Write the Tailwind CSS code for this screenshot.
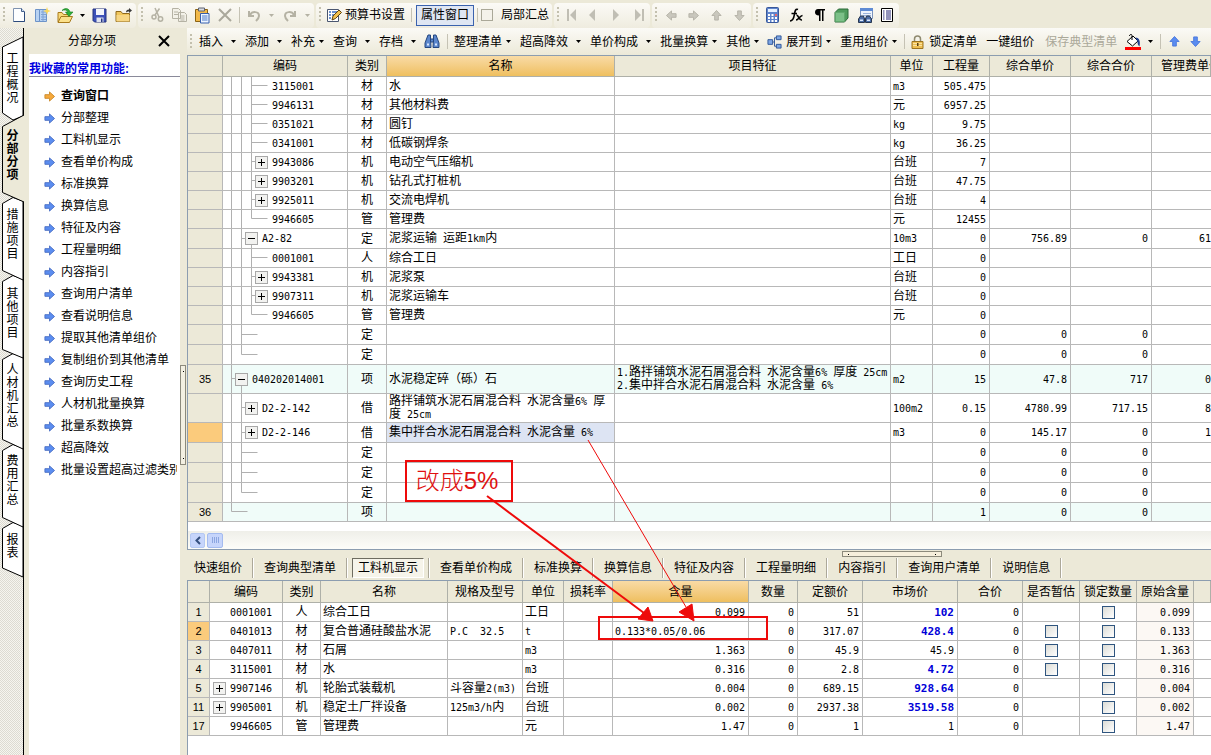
<!DOCTYPE html>
<html lang="zh-CN">
<head>
<meta charset="utf-8">
<title>分部分项</title>
<script src="https://cdn.jsdelivr.net/npm/@tailwindcss/browser@4"></script>
</head>
<body class="bg-[#ece9d8] text-black text-[12px] leading-[14px] font-['Liberation_Sans','Noto_Sans_CJK_SC',sans-serif]">
<svg class="hidden">
  <symbol id="grip" viewBox="0 0 8 18"><path d="M3 1h2v2H3zM3 5h2v2H3zM3 9h2v2H3zM3 13h2v2H3z" fill="#c3c0ae"/></symbol>
  <symbol id="dd" viewBox="0 0 5 3"><path d="M0 0h5L2.500 3z" fill="currentColor"/></symbol>
  <symbol id="arr" viewBox="0 0 12 12"><path d="M1 4h5V1l5.500 5L6 11V8H1z"/></symbol>
</svg>
<div class="relative flex h-screen flex-col overflow-hidden">

  <!-- main toolbar -->
  <header class="flex h-[28px] shrink-0 items-center gap-[2px] overflow-hidden whitespace-nowrap pt-[2px]">
    <div class="flex h-[25px] items-center rounded-r bg-gradient-to-b from-[#fbfaf6] to-[#efecdf]">
      <svg class="h-[18px] w-[8px]"><use href="#grip"/></svg>
      <button aria-label="新建" class="flex w-[22px] justify-center"><svg width="14" height="16" viewBox="0 0 14 16"><path d="M1.500 1.500h8l3 3v10h-11z" fill="#fdfeff" stroke="#7f93b0"/><path d="M9.500 1.500v3h3" fill="#cfe0f4" stroke="#44608c"/><path d="M12.500 5v9.500h-11" fill="none" stroke="#2c4a7c"/></svg></button>
      <button aria-label="新建向导" class="flex w-[24px] justify-center"><svg width="17" height="17" viewBox="0 0 17 17"><path d="M1.500 2.500h4v12h-4zM5.500 2.500h7v12h-7z" fill="#b8d2f2" stroke="#6c93c9"/><path d="M7 5h5M7 7.500h5M7 10h5M7 12.500h5M9 3v11" stroke="#7fa3d6"/><path d="M13 0l1 3 3 1-3 1-1 3-1-3-3-1 3-1z" fill="#f8d75a"/></svg></button>
      <button aria-label="打开" class="flex w-[22px] justify-center"><svg width="17" height="17" viewBox="0 0 17 17"><path d="M1 15V5.500h4l1.500 2H12V10" fill="#f9d978" stroke="#a87a1c"/><path d="M1 15.500L4 9.500h11.500l-3 6z" fill="#fbe08a" stroke="#a87a1c"/><path d="M5 3.500C8 .5 12 1 13 5h3l-4 4.500L8.500 5H11C10 3 7.500 2.500 5 3.500z" fill="#2fb13a" stroke="#167a20" stroke-width=".6"/></svg></button>
      <button aria-label="打开列表" class="flex w-[12px] justify-center"><svg class="h-[3px] w-[5px]"><use href="#dd"/></svg></button>
      <button aria-label="保存" class="flex w-[22px] justify-center"><svg width="15" height="15" viewBox="0 0 15 15"><path d="M1 1h13v13H2.500L1 12.500z" fill="#3c50b8" stroke="#26357f"/><path d="M4 1h8v6H4z" fill="#f3f5fb"/><path d="M4.500 9.500h7V14h-7z" fill="#dfe3ef"/><path d="M9 10.500h1.500V14H9z" fill="#26357f"/></svg></button>
      <button aria-label="关闭工程" class="flex w-[26px] justify-center"><svg width="17" height="15" viewBox="0 0 17 15"><path d="M1 13.500V3.500h5l1.500 2h7v8z" fill="#f0c65c" stroke="#8f681c"/><path d="M1.500 7h13v6.500h-13z" fill="#f7d684"/><path d="M11 4.500c0-2 1-3 3-3V0l3 2.500L14 5V3.500c-1 0-2 0-3 1z" fill="#3b3b3b"/></svg></button>
    </div>
    <div class="flex h-[25px] items-center rounded bg-gradient-to-b from-[#fbfaf6] to-[#efecdf] text-[#b5b2a4]">
      <svg class="h-[18px] w-[8px]"><use href="#grip"/></svg>
      <button aria-label="剪切" class="flex w-[22px] justify-center"><svg width="13" height="16" viewBox="0 0 13 16" fill="none" stroke="currentColor" stroke-width="1.500"><path d="M4 1l4 9M8.500 1.500L4 8"/><circle cx="3" cy="10" r="2"/><circle cx="9.500" cy="12" r="2.200"/></svg></button>
      <button aria-label="复制" class="flex w-[22px] justify-center"><svg width="17" height="16" viewBox="0 0 17 16" fill="#f3f1e8" stroke="currentColor"><path d="M1.500 1.500h6l2 2v8h-8zM7.500 5.500h6l2 2v7h-8z"/><path d="M3 5h4M3 7.500h4M9.500 9h4M9.500 11h4M9.500 13h4"/></svg></button>
      <button aria-label="粘贴" class="flex w-[24px] justify-center"><svg width="16" height="17" viewBox="0 0 16 17"><path d="M1.500 2.500h12v12h-12z" fill="#f2b94a" stroke="#8c6416"/><path d="M4.500 1h6v3h-6z" fill="#d8dbe2" stroke="#5c6273"/><path d="M6.500 6.500h8.500v9.500H6.500z" fill="#eef5ff" stroke="#365fae"/><path d="M8 9h5.500M8 11h5.500M8 13h5.500" stroke="#4a79c8"/></svg></button>
      <button aria-label="删除" class="flex w-[22px] justify-center"><svg width="14" height="14" viewBox="0 0 14 14" stroke="#aaa89c" stroke-width="2"><path d="M1 1l12 12M13 1L1 13"/></svg></button>
      <span class="mx-[3px] h-[16px] w-[2px] border-l border-[#c5c2b4]"></span>
      <button aria-label="撤销" class="flex w-[20px] justify-center"><svg width="13" height="13" viewBox="0 0 13 13" fill="none" stroke="currentColor" stroke-width="2"><path d="M1 2v5h5M2 6c2-4 9-4 9 1 0 2-1 3-3 5"/></svg></button>
      <button aria-label="撤销列表" class="flex w-[14px] justify-center"><svg class="h-[3px] w-[5px]"><use href="#dd"/></svg></button>
      <button aria-label="重做" class="flex w-[22px] justify-center"><svg width="13" height="13" viewBox="0 0 13 13" fill="none" stroke="currentColor" stroke-width="2"><path d="M12 2v5H7M11 6C9 2 2 2 2 7c0 2 1 3 3 5"/></svg></button>
      <button aria-label="重做列表" class="flex w-[14px] justify-center"><svg class="h-[3px] w-[5px]"><use href="#dd"/></svg></button>
    </div>
    <div class="flex h-[25px] items-center rounded bg-gradient-to-b from-[#fbfaf6] to-[#efecdf] pr-[3px]">
      <svg class="h-[18px] w-[8px]"><use href="#grip"/></svg>
      <button class="flex items-center gap-[3px] pl-[2px]"><svg width="16" height="15" viewBox="0 0 16 15"><path d="M1.500 1.500h11v12h-11z" fill="#fff" stroke="#4a5670"/><path d="M3 4h2M3 7h2M3 10h2M6 4h5M6 7h3" stroke="#3d6fc0" stroke-width="1.500"/><path d="M6 12l1-4 6-6 2.500 2.500-6 6z" fill="#f0c050" stroke="#5c4210"/></svg>预算书设置</button>
      <span class="ml-[6px] mr-[4px] h-[14px] w-px bg-[#c5c2b4]"></span>
      <button class="h-[21px] w-[58px] border border-[#3a62ae] bg-[#dfe6f3]">属性窗口</button>
      <span class="mx-[3px] h-[14px] w-px bg-[#c5c2b4]"></span>
      <label class="flex items-center gap-[8px]"><input type="checkbox" class="h-[12px] w-[12px] appearance-none border border-[#aaa898] bg-[#f4f2ea]">局部汇总</label>
    </div>
    <div class="flex h-[25px] items-center rounded bg-gradient-to-b from-[#fbfaf6] to-[#efecdf] text-[#c0beb4]">
      <svg class="h-[18px] w-[8px]"><use href="#grip"/></svg>
      <button aria-label="第一个" class="flex w-[18px] justify-center"><svg width="11" height="12" viewBox="0 0 11 12" fill="currentColor"><path d="M1 0h2v12H1zM10 0v12L4 6z"/></svg></button>
      <button aria-label="上一个" class="flex w-[24px] justify-center"><svg width="8" height="12" viewBox="0 0 8 12" fill="currentColor"><path d="M7 0v12L1 6z"/></svg></button>
      <button aria-label="下一个" class="flex w-[24px] justify-center"><svg width="8" height="12" viewBox="0 0 8 12" fill="currentColor"><path d="M1 0v12l6-6z"/></svg></button>
      <button aria-label="最后一个" class="flex w-[22px] justify-center"><svg width="11" height="12" viewBox="0 0 11 12" fill="currentColor"><path d="M8 0h2v12H8zM1 0v12l6-6z"/></svg></button>
    </div>
    <div class="flex h-[25px] items-center rounded bg-gradient-to-b from-[#fbfaf6] to-[#efecdf] text-[#c0beb4]">
      <svg class="h-[18px] w-[8px]"><use href="#grip"/></svg>
      <button aria-label="左移" class="flex w-[22px] justify-center"><svg class="h-[11px] w-[11px] rotate-180 fill-[#c9c7bd] stroke-[#b3b1a6]"><use href="#arr"/></svg></button>
      <button aria-label="右移" class="flex w-[23px] justify-center"><svg class="h-[11px] w-[11px] fill-[#c9c7bd] stroke-[#b3b1a6]"><use href="#arr"/></svg></button>
      <button aria-label="上移" class="flex w-[23px] justify-center"><svg class="h-[11px] w-[11px] -rotate-90 fill-[#c9c7bd] stroke-[#b3b1a6]"><use href="#arr"/></svg></button>
      <button aria-label="下移" class="flex w-[23px] justify-center"><svg class="h-[11px] w-[11px] rotate-90 fill-[#c9c7bd] stroke-[#b3b1a6]"><use href="#arr"/></svg></button>
    </div>
    <div class="flex h-[25px] items-center rounded bg-gradient-to-b from-[#fbfaf6] to-[#efecdf] pr-[2px]">
      <svg class="h-[18px] w-[8px]"><use href="#grip"/></svg>
      <button aria-label="计算器" class="flex w-[22px] justify-center"><svg width="13" height="16" viewBox="0 0 13 16"><rect x=".5" y=".5" width="12" height="15" rx="1" fill="#5f84cc" stroke="#38589a"/><path d="M2 2h9v3H2z" fill="#e4f0ff"/><path d="M2 7h2v2H2zM5.500 7h2v2h-2zM2 10h2v2H2zM5.500 10h2v2h-2zM2 13h2v2H2zM5.500 13h2v2h-2zM9 10h2v2H9zM9 13h2v2H9z" fill="#fff"/><path d="M9 7h2v2H9z" fill="#e66"/></svg></button>
      <button aria-label="函数" class="flex w-[26px] justify-center"><svg width="15" height="15" viewBox="0 0 15 15" fill="none" stroke="#000" stroke-width="1.600"><path d="M9 1.500C6.500 .5 6 3 5.500 6S4.500 13 1 13M2.500 5.500H8M7.500 7.500c2-1 2 5 5.500 4.500M13.500 7.500c-2.500 0-4 4.500-6.500 4.500"/></svg></button>
      <button aria-label="段落" class="flex w-[20px] justify-center"><svg width="11" height="14" viewBox="0 0 11 14"><path d="M4 1h7v1.500H9.500V13H8V2.500H6.500V13H5V7.500C2 7.500 1 6 1 4.200S2 1 4 1z"/></svg></button>
      <button aria-label="构件" class="flex w-[24px] justify-center"><svg width="15" height="15" viewBox="0 0 15 15" stroke="#2c6a3a"><path d="M1 4.500L4.500 1H14v9l-3.500 4H1z" fill="#4f9c5d"/><path d="M1.500 4.500h9v9h-9z" fill="#7cc088" stroke="#5fa86c"/></svg></button>
      <button aria-label="查找报表" class="flex w-[24px] justify-center"><svg width="17" height="17" viewBox="0 0 17 17"><path d="M3.500 1.500h12v10h-12z" fill="#eef4fd" stroke="#7b93bd"/><path d="M3 1h13v3H3z" fill="#5f8bd4"/><path d="M6 6.500h8M6 8.500h8" stroke="#9bb4dc"/><path d="M3.500 9h3l1 3v3.500h-6V12zM9.500 9h3l2 3v3.500h-6V12z" fill="#4c6ea8" stroke="#27364f"/><path d="M3 12.500h3v1.500H3zM10 12.500h3v1.500h-3z" fill="#dbe8fb"/></svg></button>
      <button aria-label="列表" class="flex w-[20px] justify-center"><svg width="12" height="14" viewBox="0 0 12 14"><path d="M.5 .5h11v13H.5z" fill="#fff" stroke="#000"/><path d="M2 3h1.500M2 5h1.500M2 7h1.500M2 9h1.500M2 11h1.500M5 3h5M5 5h5M5 7h5M5 9h5M5 11h5" stroke="#11116a" stroke-width=".9"/></svg></button>
    </div>
  </header>

  <div class="flex min-h-0 flex-1">
    <!-- vertical page tabs -->
    <nav class="relative w-[24px] shrink-0 pt-[9px]">
      <svg class="absolute left-0 top-0 h-full w-[24px]" stroke="#000" fill="#fff">
        <defs><pattern id="dither" width="2" height="2" patternUnits="userSpaceOnUse"><path d="M0 0h1v1H0zM1 1h1v1H1z" fill="#dddbd2" stroke="none"/><path d="M1 0h1v1H1zM0 1h1v1H0z" fill="#f6f5ef" stroke="none"/></pattern></defs>
        <rect width="24" height="100%" fill="url(#dither)" stroke="none"/>
        <path d="M13 494.500L2.500 500.500v39.500L23 549V497z"/>
        <path d="M13 416.500L2.500 422.500v67L23 499V420z"/>
        <path d="M13 325.500L2.500 331.500v80L23 421V329z"/>
        <path d="M13 247.500L2.500 253.500v68L23 330V251z"/>
        <path d="M13 169.500L2.500 175.500v67L23 252V173z"/>
        <path d="M23 9L2.500 19v66L13 92l10-4z"/>
        <rect x="23" width="1" height="100%" fill="#000" stroke="none"/>
        <path d="M24 87L2.500 98.500v66L24 174" fill="#ece9d8"/>
      </svg>
      <div class="relative flex flex-col pl-[1px] leading-[13px]">
        <button class="flex h-[84px] items-center justify-center"><span class="w-[12px] break-all">工程概况</span></button>
        <button class="flex h-[70px] items-center justify-center font-bold"><span class="w-[12px] break-all">分部分项</span></button>
        <button class="flex h-[88px] items-center justify-center"><span class="w-[12px] break-all">措施项目</span></button>
        <button class="flex h-[70px] items-center justify-center"><span class="w-[12px] break-all">其他项目</span></button>
        <button class="flex h-[95px] items-center justify-center"><span class="w-[12px] break-all">人材机汇总</span></button>
        <button class="flex h-[74px] items-center justify-center"><span class="w-[12px] break-all">费用汇总</span></button>
        <button class="flex h-[58px] items-center justify-center"><span class="w-[12px] break-all">报表</span></button>
      </div>
    </nav>

    <!-- function panel -->
    <aside class="flex w-[156px] shrink-0 flex-col pl-[5px]">
      <div class="flex h-[26px] shrink-0 items-center justify-between pl-[39px] pr-[10px]">
        <h2>分部分项</h2>
        <button aria-label="关闭"><svg width="12" height="12" viewBox="0 0 12 12" stroke="#000" stroke-width="2"><path d="M1 1l10 10M11 1L1 11"/></svg></button>
      </div>
      <div class="flex-1 overflow-hidden whitespace-nowrap bg-white pt-[8px]">
        <h3 class="mb-[8px] border-b border-[#8a8a9a] font-bold text-[#0000e0]"><a href="#fav">我收藏的常用功能:</a></h3>
        <ul id="funcs"></ul>
      </div>
    </aside>
    <div class="flex w-[7px] shrink-0 items-center pt-[46px]">
      <div class="flex h-[100px] w-[6px] flex-col items-center justify-between border border-[#8c8a7c] bg-[#f3f0e2] py-[5px]"><i class="h-px w-px bg-black"></i><i class="h-px w-px bg-black"></i></div>
    </div>

    <main class="flex min-w-0 flex-1 flex-col overflow-hidden">
      <!-- edit toolbar -->
      <div class="flex h-[27px] shrink-0 items-center whitespace-nowrap bg-gradient-to-b from-[#fbfaf6] to-[#ece9d8]">
        <svg class="mr-[4px] h-[18px] w-[8px]"><use href="#grip"/></svg>
        <button class="flex items-center gap-[8px] pr-[9px]">插入<svg class="h-[3px] w-[5px]"><use href="#dd"/></svg></button>
        <button class="flex items-center gap-[8px] pr-[9px]">添加<svg class="h-[3px] w-[5px]"><use href="#dd"/></svg></button>
        <button class="flex items-center gap-[4px] pr-[9px]">补充<svg class="h-[3px] w-[5px]"><use href="#dd"/></svg></button>
        <button class="flex items-center gap-[8px] pr-[9px]">查询<svg class="h-[3px] w-[5px]"><use href="#dd"/></svg></button>
        <button class="flex items-center gap-[8px] pr-[8px]">存档<svg class="h-[3px] w-[5px]"><use href="#dd"/></svg></button>
        <button aria-label="查找"><svg width="16" height="15" viewBox="0 0 16 15" fill="#5b86cc" stroke="#24467f"><path d="M4 1h2.500v3L7 13.500H1V9zM12 1H9.500v3L9 13.500h6V9z"/><path d="M6.500 5h3v3h-3z"/><path d="M3 9.500h2v2H3zM11 9.500h2v2h-2z" fill="#d8e7ff" stroke="none"/></svg></button>
        <span class="ml-[7px] mr-[6px] h-[15px] w-px bg-[#c5c2b4]"></span>
        <button class="flex items-center gap-[4px] pr-[9px]">整理清单<svg class="h-[3px] w-[5px]"><use href="#dd"/></svg></button>
        <button class="flex items-center gap-[8px] pr-[9px]">超高降效<svg class="h-[3px] w-[5px]"><use href="#dd"/></svg></button>
        <button class="flex items-center gap-[8px] pr-[9px]">单价构成<svg class="h-[3px] w-[5px]"><use href="#dd"/></svg></button>
        <button class="flex items-center gap-[4px] pr-[9px]">批量换算<svg class="h-[3px] w-[5px]"><use href="#dd"/></svg></button>
        <button class="flex items-center gap-[4px] pr-[8px]">其他<svg class="h-[3px] w-[5px]"><use href="#dd"/></svg></button>
        <button class="flex items-center gap-[4px] pr-[9px]"><svg width="15" height="14" viewBox="0 0 16 14" fill="#7ea6e4" stroke="#2f5597"><path d="M1 4.500h5v5H1zM10 .5h5v4h-5zM10 9.500h5v4h-5z"/><path d="M6 7h2M8 2.500V11.500M8 2.500h2M8 11.500h2" fill="none"/></svg>展开到<svg class="h-[3px] w-[5px]"><use href="#dd"/></svg></button>
        <button class="flex items-center gap-[4px] pr-[7px]">重用组价<svg class="h-[3px] w-[5px]"><use href="#dd"/></svg></button>
        <span class="mr-[6px] h-[15px] w-px bg-[#c5c2b4]"></span>
        <button class="flex items-center gap-[5px] pr-[9px]"><svg width="13" height="14" viewBox="0 0 13 14"><path d="M3.500 7V4c0-4 6-4 6 0v3" fill="none" stroke="#8f8a70" stroke-width="1.500"/><path d="M1 6.500h11v7H1z" fill="#eebf52" stroke="#9c7420"/><path d="M2 8.500h9M2 10.500h9" stroke="#fbe3a0"/><path d="M6 8h1.500v3H6z" fill="#5c4210"/></svg>锁定清单</button>
        <button class="pr-[11px]">一键组价</button>
        <button disabled class="pr-[8px] text-[#aaa899]">保存典型清单</button>
        <button aria-label="填充色"><svg width="16" height="16" viewBox="0 0 16 16"><path d="M0 13h16v3H0z" fill="#f00"/><path d="M2 7.500L8 2l5 5-5.500 5z" fill="#fff" stroke="#000"/><path d="M7 6V1.500C7 0 4.500 0 4.500 2" fill="none" stroke="#000"/><path d="M10.500 3.500c4 0 5 4 4 9-1.500-1-2-3-2-5z" fill="#1f3f92"/></svg></button>
        <button aria-label="填充色列表" class="px-[7px]"><svg class="h-[3px] w-[5px]"><use href="#dd"/></svg></button>
        <span class="mr-[8px] h-[15px] w-px bg-[#c5c2b4]"></span>
        <button aria-label="向上" class="mr-[10px]"><svg class="h-[11px] w-[11px] -rotate-90 fill-[#5a8cf0] stroke-[#4a78dc]"><use href="#arr"/></svg></button>
        <button aria-label="向下"><svg class="h-[11px] w-[11px] rotate-90 fill-[#5a8cf0] stroke-[#4a78dc]"><use href="#arr"/></svg></button>
      </div>

      <!-- bill of quantities -->
      <section class="shrink-0 border-y border-l border-[#8c9db0] bg-white">
        <table class="w-full table-fixed border-separate border-spacing-0">
          <colgroup><col class="w-[35px]"><col class="w-[125px]"><col class="w-[39px]"><col class="w-[228px]"><col class="w-[276px]"><col class="w-[42px]"><col class="w-[57px]"><col class="w-[81px]"><col class="w-[81px]"><col></colgroup>
          <thead><tr id="head1"></tr></thead>
          <tbody id="body1"></tbody>
        </table>
        <div class="mt-[9px] flex h-[18px] items-center gap-[2px] bg-gradient-to-b from-[#efefe9] to-[#fdfdf9] pl-[2px]">
          <button aria-label="向左滚动" class="flex h-[15px] w-[15px] items-center justify-center rounded-[2px] border border-[#b4c8f2] bg-[#c6d5fb]"><svg width="6" height="9" viewBox="0 0 6 9" fill="none" stroke="#35507f" stroke-width="2"><path d="M5 1L1.500 4.500 5 8"/></svg></button>
          <div class="flex h-[15px] w-[16px] items-center justify-center gap-px rounded-[2px] border border-[#a4bbef] bg-[#c6d5fb]"><i class="h-[6px] w-px bg-[#8ca6e0]"></i><i class="h-[6px] w-px bg-[#8ca6e0]"></i><i class="h-[6px] w-px bg-[#8ca6e0]"></i><i class="h-[6px] w-px bg-[#8ca6e0]"></i></div>
        </div>
      </section>

      <div class="flex h-[7px] shrink-0 pl-[64%] pt-[1px]"><div class="flex h-[6px] w-[100px] items-center justify-between border border-[#8c8a7c] bg-[#f6efdc] px-[5px]"><i class="h-px w-px bg-black"></i><i class="h-px w-px bg-black"></i></div></div>
      <div id="tabs" role="tablist" class="flex h-[23px] shrink-0 items-center whitespace-nowrap pb-[2px]"></div>

      <!-- resources of the selected quota item -->
      <section class="min-h-0 flex-1 overflow-hidden border-l border-t border-[#8c9db0] bg-white">
        <table class="w-full table-fixed border-separate border-spacing-0">
          <colgroup><col class="w-[22px]"><col class="w-[73px]"><col class="w-[38px]"><col class="w-[127px]"><col class="w-[75px]"><col class="w-[41px]"><col class="w-[49px]"><col class="w-[136px]"><col class="w-[49px]"><col class="w-[65px]"><col class="w-[95px]"><col class="w-[65px]"><col class="w-[57px]"><col class="w-[57px]"><col class="w-[57px]"><col></colgroup>
          <thead><tr id="head2"></tr></thead>
          <tbody id="body2"></tbody>
        </table>
      </section>
    </main>
  </div>

  <!-- annotations -->
  <svg class="pointer-events-none absolute left-0 top-0 h-full w-full" fill="none" stroke="#ee0a0a">
    <path d="M487 496L644 613" stroke-width="2"/>
    <path d="M588 440L686 607" stroke-width="1"/>
    <path d="M653 621l-15-2 10-12zM694 621l-15-9 13-8z" fill="#ee0a0a"/>
    <rect x="599" y="617" width="168" height="22" stroke-width="2"/>
  </svg>
  <div class="absolute left-[405px] top-[460px] flex h-[42px] w-[108px] items-center justify-center border-2 border-[#ee0a0a] pr-[4px] text-[24px] leading-[28px] text-[#e01010]"><span class="font-light">改成</span>5%</div>
</div>

<script>
const $ = id => document.getElementById(id);
const latin = s => String(s).replace(/[\x20-\x7e]+/g, t => `<span class="whitespace-pre font-['DejaVu_Sans_Mono',monospace] text-[10px]">${t}</span>`);

$('funcs').innerHTML = ['查询窗口','分部整理','工料机显示','查看单价构成','标准换算','换算信息','特征及内容','工程量明细','内容指引','查询用户清单','查看说明信息','提取其他清单组价','复制组价到其他清单','查询历史工程','人材机批量换算','批量系数换算','超高降效','批量设置超高过滤类别']
  .map((t, i) => `<li class="mr-[3px] flex h-[22px] items-center gap-[6px] overflow-hidden pl-[15px]"><svg class="${i ? 'h-[11px] w-[11px] shrink-0 fill-[#5b8df0] stroke-[#4a70c4]' : 'h-[11px] w-[11px] shrink-0 fill-[#f6a93c] stroke-[#c98a2c]'}"><use href="#arr"/></svg><a href="#f${i}" class="${i ? '' : 'font-bold'}">${t}</a></li>`).join('');

$('tabs').innerHTML = ['快速组价','查询典型清单','工料机显示','查看单价构成','标准换算','换算信息','特征及内容','工程量明细','内容指引','查询用户清单','说明信息']
  .map((t, i) => `<button role="tab" class="${i === 2 ? 'mx-[4px] h-[20px] border border-[#fff] border-l-[#6e6c60] border-t-[#6e6c60] bg-[#f6f4ea] px-[5px]' : i ? 'px-[10px]' : 'pl-[7px] pr-[10px]'}">${t}</button><span class="h-[20px] w-[2px] border-l border-r border-l-[#aca899] border-r-white"></span>`).join('');

const H = "overflow-hidden whitespace-nowrap border-b border-r border-[#aeb0a8] bg-[#ece9d8] p-0 font-normal";
const HO = "overflow-hidden whitespace-nowrap border-b border-r border-[#aeb0a8] bg-gradient-to-b from-[#f9dba5] to-[#efbf5e] p-0 font-normal";
$('head1').innerHTML = ['','编码','类别','名称','项目特征','单位','工程量','综合单价','综合合价','管理费单价']
  .map((t, i) => `<th class="${i === 3 ? HO : H} h-[21px] ${i === 9 ? 'pl-[9px] text-left' : ''}">${t}</th>`).join('');
$('head2').innerHTML = ['','编码','类别','名称','规格及型号','单位','损耗率','含量','数量','定额价','市场价','合价','是否暂估','锁定数量','原始含量','']
  .map((t, i) => `<th class="${i === 7 ? HO : H} h-[22px]">${t}</th>`).join('');

const box = minus => `<button aria-label="${minus ? '折叠' : '展开'}" class="relative mr-[4px] h-[13px] w-[13px] shrink-0 border border-[#a8a8a8] bg-[#f2f2f0]"><svg class="block" width="11" height="11" stroke="#000"><path d="${minus ? 'M2 5.500h7' : 'M2 5.500h7M5.500 2v7'}"/></svg></button>`;

// tree guides: level 1 starts at x=8, each level adds 10
function tree(level, node, last, h) {
  const x = level * 10 - 1.5, mid = Math.round(h / 2) - .5;
  let d = '';
  for (let k = 1; k < level; k++) d += `M${k * 10 - 1.5} 0V${h}`;
  d += `M${x} 0V${last ? mid : h}M${x} ${mid}H${x + (node ? 5 : 16)}`;
  if (node === '-') d += `M${x + 10} ${mid}V${h}`;
  return `<svg class="absolute left-0 top-0" width="70" height="${h}" fill="none" stroke="#b0b0b0"><path d="${d}"/></svg>`;
}
const indent = {
  1: ['pl-[12px]', 'pl-[29px]'], 2: ['pl-[22px]', 'pl-[39px]'], 3: ['pl-[32px]', 'pl-[49px]']
};
const heights = {19: 'h-[19px]', 20: 'h-[20px]', 29: 'h-[29px]'}, inner = {19: 'h-[18px]', 20: 'h-[19px]', 29: 'h-[28px]'};
// no, level, node, last, code, kind, name, feature, unit, qty, price, total, mgmt, height
const rows = [
  ['',3,'',0,'3115001','材','水','','m3','505.475','','','',19],
  ['',3,'',0,'9946131','材','其他材料费','','元','6957.25','','','',19],
  ['',3,'',0,'0351021','材','圆钉','','kg','9.75','','','',19],
  ['',3,'',0,'0341001','材','低碳钢焊条','','kg','36.25','','','',19],
  ['',3,'+',0,'9943086','机','电动空气压缩机','','台班','7','','','',19],
  ['',3,'+',0,'9903201','机','钻孔式打桩机','','台班','47.75','','','',19],
  ['',3,'+',0,'9925011','机','交流电焊机','','台班','4','','','',19],
  ['',3,'',1,'9946605','管','管理费','','元','12455','','','',19],
  ['',2,'-',0,'A2-82','定','泥浆运输 运距1km内','','10m3','0','756.89','0','61',20],
  ['',3,'',0,'0001001','人','综合工日','','工日','0','','','',19],
  ['',3,'+',0,'9943381','机','泥浆泵','','台班','0','','','',19],
  ['',3,'+',0,'9907311','机','泥浆运输车','','台班','0','','','',19],
  ['',3,'',1,'9946605','管','管理费','','元','0','','','',19],
  ['',2,'',0,'','定','','','','0','0','0','',20],
  ['',2,'',1,'','定','','','','0','0','0','',20],
  ['35',1,'-',0,'040202014001','项','水泥稳定碎（砾）石','1.路拌铺筑水泥石屑混合料 水泥含量6% 厚度 25cm<br>2.集中拌合水泥石屑混合料 水泥含量 6%','m2','15','47.8','717','0',29],
  ['',2,'+',0,'D2-2-142','借','路拌铺筑水泥石屑混合料 水泥含量6% 厚度 25cm','','100m2','0.15','4780.99','717.15','8',29],
  ['',2,'+',0,'D2-2-146','借','集中拌合水泥石屑混合料 水泥含量 6%','','m3','0','145.17','0','1',20],
  ['',2,'',0,'','定','','','','0','0','0','',20],
  ['',2,'',0,'','定','','','','0','0','0','',20],
  ['',2,'',1,'','定','','','','0','0','0','',20],
  ['36',1,'',1,'','项','','','','1','0','0','',19]
];
$('body1').innerHTML = rows.map(r => {
  const [no, lv, node, last, code, kind, name, feat, unit, qty, price, total, mg, h] = r;
  const sel = code === 'D2-2-146';
  const C = `${heights[h]} overflow-hidden border-b border-r border-[#b8b8b8] `;
  const N = C + 'p-0 pr-[3px] text-right';
  const f = feat.split('<br>').map(latin).join('<br>');
  return `<tr class="${no ? 'bg-[#f0fcf9]' : ''}">
    <td class="${C} p-0 text-center text-[11px] ${sel ? 'bg-[#fbcb7c]' : 'bg-[#ece9d8]'}">${no}</td>
    <td class="${C} p-0"><div class="relative flex items-center ${inner[h]} ${indent[lv][node ? 0 : 1]}">${tree(lv, node, last, h - 1)}${node ? box(node === '-') : ''}<span>${latin(code)}</span></div></td>
    <td class="${C} p-0 text-center">${kind}</td>
    <td class="${C} p-0 pl-[2px] leading-[13px] ${sel ? 'bg-[#dde4f3]' : ''}">${latin(name)}</td>
    <td class="${C} p-0 pl-[2px] leading-[13px] whitespace-nowrap">${f}</td>
    <td class="${C} p-0 pl-[2px]">${latin(unit)}</td>
    <td class="${N}">${latin(qty)}</td><td class="${N}">${latin(price)}</td><td class="${N}">${latin(total)}</td>
    <td class="${heights[h]} overflow-hidden border-b border-[#b8b8b8] p-0 text-right">${latin(mg)}</td></tr>`;
}).join('');

const check = l => `<input type="checkbox" aria-label="${l}" class="mx-auto block h-[13px] w-[13px] appearance-none border border-[#2f557f] bg-gradient-to-br from-[#dcdcd6] to-white">`;
// no, node, code, kind, name, spec, unit, content, price, market, edited, estimate
const res = [
  ['1','','0001001','人','综合工日','','工日','0.099','51','102',1,0],
  ['2','','0401013','材','复合普通硅酸盐水泥','P.C  32.5','t','0.133','317.07','428.4',1,1],
  ['3','','0407011','材','石屑','','m3','1.363','45.9','45.9',0,1],
  ['4','','3115001','材','水','','m3','0.316','2.8','4.72',1,1],
  ['5','+','9907146','机','轮胎式装载机','斗容量2(m3)','台班','0.004','689.15','928.64',1,0],
  ['11','+','9905001','机','稳定土厂拌设备','125m3/h内','台班','0.002','2937.38','3519.58',1,0],
  ['17','','9946605','管','管理费','','元','1.47','1','1',0,0]
];
$('body2').innerHTML = res.map(r => {
  const [no, node, code, kind, name, spec, unit, content, price, market, edited, est] = r;
  const sel = no === '2';
  const C = 'h-[19px] overflow-hidden whitespace-nowrap border-b border-r border-[#b8b8b8] ';
  const N = C + 'p-0 pr-[3px] text-right';
  return `<tr>
    <td class="${C} p-0 text-center text-[11px] ${sel ? 'bg-[#fbcb7c]' : 'bg-[#ece9d8]'}">${no}</td>
    <td class="${C} p-0"><div class="flex h-[18px] items-center ${node ? 'pl-[3px]' : 'pl-[20px]'}">${node ? box(false) : ''}<span>${latin(code)}</span></div></td>
    <td class="${C} p-0 text-center">${kind}</td>
    <td class="${C} p-0 pl-[2px]">${name}</td>
    <td class="${C} p-0 pl-[2px]">${latin(spec)}</td>
    <td class="${C} p-0 pl-[2px]">${latin(unit)}</td>
    <td class="${C} p-0"></td>
    ${sel ? `<td class="${C} p-0 pl-[2px]"><input aria-label="含量" value="0.133*0.05/0.06" class="block h-[16px] w-full font-['DejaVu_Sans_Mono',monospace] text-[10px] outline-none"></td>` : `<td class="${N}">${latin(content)}</td>`}
    <td class="${N}">${latin('0')}</td>
    <td class="${N}">${latin(price)}</td>
    <td class="${N}">${edited ? `<span class="font-['DejaVu_Sans_Mono',monospace] text-[11px] font-bold text-[#0000d8]">${market}</span>` : latin(market)}</td>
    <td class="${N}">${latin('0')}</td>
    <td class="${C} p-0">${est ? check('是否暂估 ' + name) : ''}</td>
    <td class="${C} p-0">${check('锁定数量 ' + name)}</td>
    <td class="${N} bg-[#fcf8f4]">${latin(content)}</td>
    <td class="h-[19px] border-b border-[#b8b8b8] p-0"></td></tr>`;
}).join('');
</script>
</body>
</html>
